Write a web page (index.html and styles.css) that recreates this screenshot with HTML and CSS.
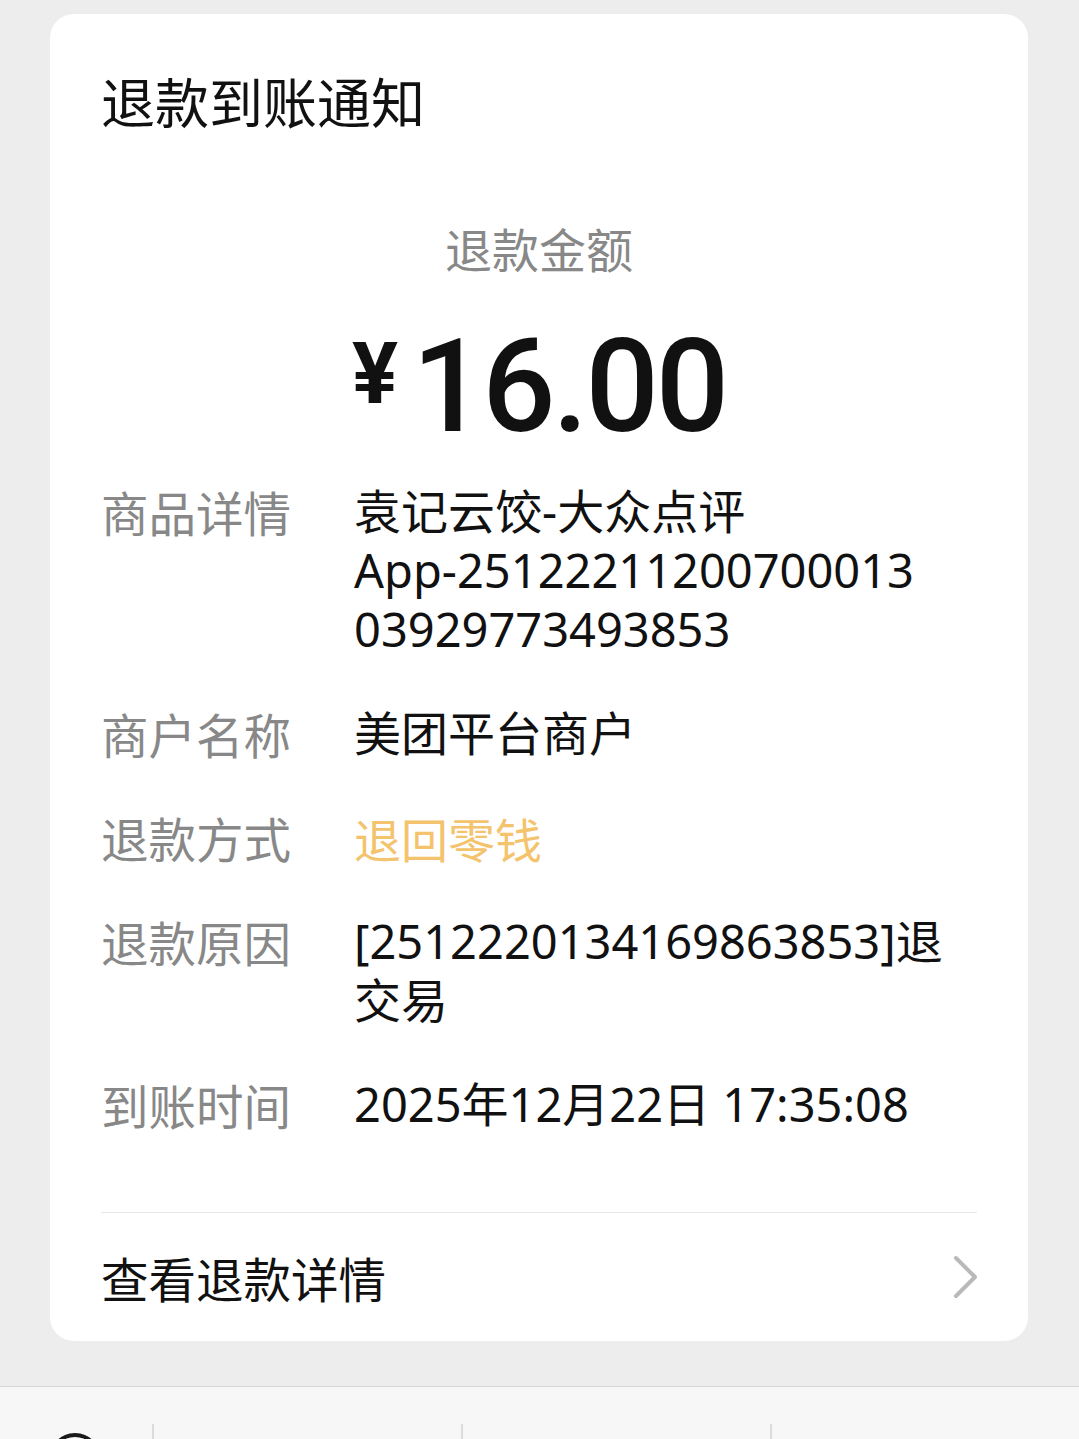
FILE: index.html
```html
<!DOCTYPE html>
<html lang="zh-CN">
<head>
  <meta charset="UTF-8">
  <title>退款到账通知</title>
  <link rel="stylesheet" href="styles.css">
</head>
<body>

  <div class="page">
    <div class="card">
      <div class="card-title">退款到账通知</div>

      <div class="amount-label">退款金额</div>
      <div class="amount"><span class="currency">¥</span><span class="number">16.00</span></div>

      <div class="details">
        <div class="row">
          <div class="label">商品详情</div>
          <div class="value">袁记云饺-大众点评<br>App-25122211200700013<br>03929773493853</div>
        </div>
        <div class="row">
          <div class="label">商户名称</div>
          <div class="value">美团平台商户</div>
        </div>
        <div class="row">
          <div class="label">退款方式</div>
          <div class="value highlight">退回零钱</div>
        </div>
        <div class="row">
          <div class="label">退款原因</div>
          <div class="value">[2512220134169863853]退交易</div>
        </div>
        <div class="row">
          <div class="label">到账时间</div>
          <div class="value">2025年12月22日 17:35:08</div>
        </div>
      </div>

      <div class="card-link">
        <span>查看退款详情</span>
        <svg class="chevron" width="26" height="44" viewBox="0 0 26 44">
          <polyline points="3,3 22,22 3,41" fill="none" stroke="#b9b9b9" stroke-width="4" stroke-linecap="round" stroke-linejoin="round"/>
        </svg>
      </div>
    </div>
  </div>

  <div class="menu-bar">
    <div class="menu-icon">
      <svg width="54" height="54" viewBox="0 0 54 54">
        <circle cx="27" cy="27" r="24" fill="none" stroke="#1a1a1a" stroke-width="4"/>
      </svg>
    </div>
    <div class="menu-item"></div>
    <div class="menu-item"></div>
    <div class="menu-item"></div>
  </div>

</body>
</html>
```

FILE: styles.css
```css
body {
  margin: 0;
  background: #ededed;
  font-family: "Noto Sans", "Noto Sans CJK SC", sans-serif;
  color: #111;
  overflow: hidden;
}

.page {
  padding: 14px 51px 0 50px;
}

.card {
  background: #fff;
  border-radius: 24px;
  padding: 50px 51px 0 51px;
}

.card-title {
  font-family: "Noto Sans CJK SC", sans-serif;
  font-size: 54px;
  line-height: 74px;
  color: #111;
}

.amount-label {
  margin-top: 77px;
  text-align: center;
  font-family: "Noto Sans CJK SC", sans-serif;
  font-size: 47px;
  line-height: 66px;
  color: #888;
}

.amount {
  margin-top: 42px;
  display: flex;
  justify-content: center;
  align-items: flex-start;
  font-family: Roboto, sans-serif;
  font-weight: 500;
  color: #111;
}

.currency {
  font-size: 86px;
  line-height: 90px;
  font-weight: bold;
  margin-top: 6px;
  margin-right: 14px;
}

.number {
  font-size: 129px;
  line-height: 128px;
  letter-spacing: -3px;
}

.details {
  margin-top: 31px;
  display: flex;
  flex-direction: column;
  gap: 45px;
}

.row {
  display: flex;
  font-size: 47px;
  line-height: 59px;
}

.label {
  width: 253px;
  flex-shrink: 0;
  font-family: "Noto Sans CJK SC", sans-serif;
  font-size: 47.5px;
  color: #888;
}

.value {
  flex: 1;
  word-break: break-all;
  color: #111;
}

.value.highlight {
  font-family: "Noto Sans CJK SC", sans-serif;
  color: #f4c36d;
}

.card-link {
  margin-top: 78px;
  border-top: 1px solid #e6e6e6;
  height: 128px;
  display: flex;
  align-items: center;
  justify-content: space-between;
  font-family: "Noto Sans CJK SC", sans-serif;
  font-size: 47.5px;
  color: #111;
}

.chevron {
  display: block;
  margin-right: -2px;
}

.menu-bar {
  margin-top: 45px;
  border-top: 1px solid #d6d6d6;
  background: #f7f7f7;
  height: 120px;
  display: flex;
}

.menu-icon {
  width: 152px;
  padding: 45px 0 0 48px;
  box-sizing: border-box;
}

.menu-icon svg {
  display: block;
}

.menu-item {
  flex: 1;
  margin-top: 37px;
  border-left: 2px solid #dcdcdc;
}
```
